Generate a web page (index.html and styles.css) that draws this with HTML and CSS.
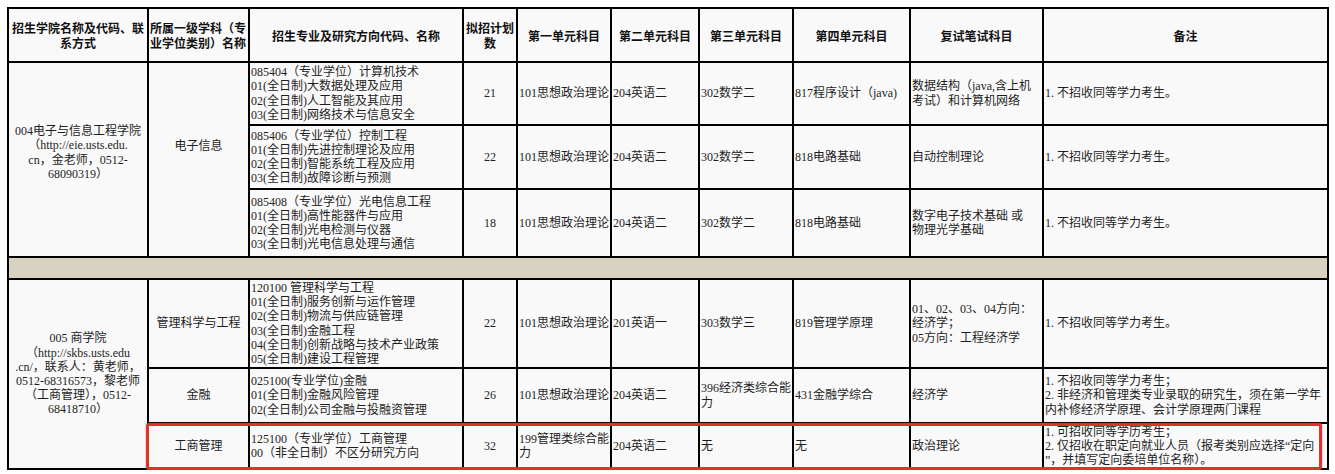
FILE: index.html
```html
<!DOCTYPE html>
<html lang="zh-CN">
<head>
<meta charset="utf-8">
<title>招生专业目录</title>
<link rel="stylesheet" href="styles.css">
</head>
<body>
<div class="wrap">
<table class="cat">
<colgroup>
<col class="c1"><col class="c2"><col class="c3"><col class="c4"><col class="c5"><col class="c6"><col class="c7"><col class="c8"><col class="c9"><col class="c10">
</colgroup>
<thead>
<tr class="h">
<th>招生学院名称及代码、联<br>系方式</th>
<th class="left">所属一级学科（专<br>业学位类别）名称</th>
<th>招生专业及研究方向代码、名称</th>
<th>拟招计划<br>数</th>
<th>第一单元科目</th>
<th>第二单元科目</th>
<th>第三单元科目</th>
<th>第四单元科目</th>
<th>复试笔试科目</th>
<th>备注</th>
</tr>
</thead>
<tbody>
<tr class="r1">
<td rowspan="3" class="center up1">004电子与信息工程学院<br>（http://eie.usts.edu.<br>cn，金老师，0512-<br>68090319）</td>
<td rowspan="3" class="center up2">电子信息</td>
<td>085404（专业学位）计算机技术<br>01(全日制)大数据处理及应用<br>02(全日制)人工智能及其应用<br>03(全日制)网络技术与信息安全</td>
<td class="center">21</td>
<td>101思想政治理论</td>
<td>204英语二</td>
<td>302数学二</td>
<td>817程序设计（java)</td>
<td>数据结构（java,含上机<br>考试）和计算机网络</td>
<td>1. 不招收同等学力考生。</td>
</tr>
<tr class="r2">
<td>085406（专业学位）控制工程<br>01(全日制)先进控制理论及应用<br>02(全日制)智能系统工程及应用<br>03(全日制)故障诊断与预测</td>
<td class="center">22</td>
<td>101思想政治理论</td>
<td>204英语二</td>
<td>302数学二</td>
<td>818电路基础</td>
<td>自动控制理论</td>
<td>1. 不招收同等学力考生。</td>
</tr>
<tr class="r3">
<td>085408（专业学位）光电信息工程<br>01(全日制)高性能器件与应用<br>02(全日制)光电检测与仪器<br>03(全日制)光电信息处理与通信</td>
<td class="center">18</td>
<td>101思想政治理论</td>
<td>204英语二</td>
<td>302数学二</td>
<td>818电路基础</td>
<td>数字电子技术基础&nbsp;或<br>物理光学基础</td>
<td>1. 不招收同等学力考生。</td>
</tr>
<tr class="sep"><td colspan="10"></td></tr>
<tr class="r4">
<td rowspan="3" class="center">005 商学院<br>（http://skbs.usts.edu<br>.cn/，联系人：黄老师，<br>0512-68316573，黎老师<br>（工商管理），0512-<br>68418710）</td>
<td class="center">管理科学与工程</td>
<td>120100 管理科学与工程<br>01(全日制)服务创新与运作管理<br>02(全日制)物流与供应链管理<br>03(全日制)金融工程<br>04(全日制)创新战略与技术产业政策<br>05(全日制)建设工程管理</td>
<td class="center">22</td>
<td>101思想政治理论</td>
<td>201英语一</td>
<td>303数学三</td>
<td>819管理学原理</td>
<td>01、02、03、04方向：<br>经济学；<br>05方向：工程经济学</td>
<td>1. 不招收同等学力考生。</td>
</tr>
<tr class="r5">
<td class="center">金融</td>
<td>025100(专业学位)金融<br>01(全日制)金融风险管理<br>02(全日制)公司金融与投融资管理</td>
<td class="center">26</td>
<td>101思想政治理论</td>
<td>204英语二</td>
<td>396经济类综合能<br>力</td>
<td>431金融学综合</td>
<td>经济学</td>
<td>1. 不招收同等学力考生；<br>2. 非经济和管理类专业录取的研究生，须在第一学年<br>内补修经济学原理、会计学原理两门课程</td>
</tr>
<tr class="r6">
<td class="center">工商管理</td>
<td>125100（专业学位）工商管理<br>00（非全日制）不区分研究方向</td>
<td class="center">32</td>
<td>199管理类综合能<br>力</td>
<td>204英语二</td>
<td>无</td>
<td>无</td>
<td>政治理论</td>
<td>1. 可招收同等学历考生；<br>2. 仅招收在职定向就业人员（报考类别应选择“定向<br>”，并填写定向委培单位名称）。</td>
</tr>
</tbody>
</table>
<div class="highlight"></div>
</div>
</body>
</html>
```

FILE: styles.css
```css
html, body {
  margin: 0;
  padding: 0;
  background: #ffffff;
}
body {
  padding: 7px 0 0 7px;
}
.wrap {
  position: relative;
  width: 1320px;
}
.cat {
  border-collapse: collapse;
  table-layout: fixed;
  width: 1320px;
  font-family: "Liberation Serif", "Noto Sans CJK SC", serif;
  font-size: 12px;
  line-height: 14.2px;
  color: #1e1e1e;
  background: #f9f9f9;
}
.c1 { width: 140px; }
.c2 { width: 101px; }
.c3 { width: 214px; }
.c4 { width: 54px; }
.c5 { width: 94px; }
.c6 { width: 88px; }
.c7 { width: 94px; }
.c8 { width: 117px; }
.c9 { width: 133px; }
.c10 { width: 285px; }
.cat th, .cat td {
  border: 2px solid #000;
  padding: 0 1px;
  vertical-align: middle;
  text-align: left;
  white-space: nowrap;
  overflow: hidden;
}
.cat th {
  font-family: "Noto Sans CJK SC", "Liberation Sans", sans-serif;
  font-weight: 700;
  text-align: center;
  line-height: 15px;
  color: #111;
}
.cat th.left {
  text-align: left;
}
.cat td.center {
  text-align: center;
}
.cat td.up1 {
  padding-bottom: 14px;
}
.cat td.up2 {
  padding-bottom: 26px;
}
.h { height: 54px; }
.r1 { height: 63px; }
.r2 { height: 64px; }
.r3 { height: 68px; }
.sep { height: 22px; }
.sep td { background: #d8d3c1; }
.r4 { height: 89px; }
.r5 { height: 55px; }
.r6 { height: 46px; }
.highlight {
  position: absolute;
  left: 139px;
  top: 416px;
  width: 1170px;
  height: 41px;
  border: 3px solid #e2312b;
  border-radius: 3px;
  box-shadow: 0 0 2px rgba(226, 49, 43, 0.5);
  pointer-events: none;
}
```
